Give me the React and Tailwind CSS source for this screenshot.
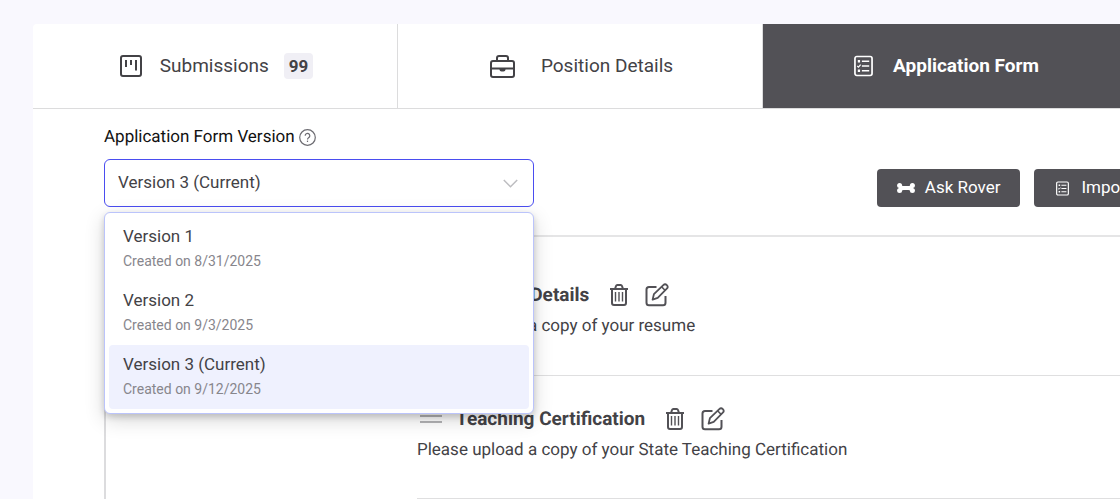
import { useState } from 'react'

const VERSIONS = [
  { id: '1', name: 'Version 1',           created: '8/31/2025' },
  { id: '2', name: 'Version 2',           created: '9/3/2025' },
  { id: '3', name: 'Version 3 (Current)', created: '9/12/2025' },
]

const SECTIONS = [
  { id: 'resume',   title: 'Resume Details',         text: 'Please upload a copy of your resume' },
  { id: 'teaching', title: 'Teaching Certification', text: 'Please upload a copy of your State Teaching Certification' },
]

function BoardIcon() {
  return (
    <svg className="w-[22px] h-[22px]" viewBox="0 0 22 22" fill="none" stroke="currentColor" strokeWidth="2" aria-hidden="true">
      <rect x="1" y="1" width="20" height="20" rx="2" />
      <path d="M6 5v7M11 5v5M16 5v10.5" />
    </svg>
  )
}

function BriefcaseIcon() {
  return (
    <svg className="w-[25px] h-[23px]" viewBox="0 0 25 23" fill="none" stroke="currentColor" strokeWidth="2" aria-hidden="true">
      <rect x="1" y="6" width="23" height="16" rx="2" />
      <path d="M7 6V3a2 2 0 0 1 2-2h7a2 2 0 0 1 2 2v3M1 13.5h23" />
      <path d="M9.5 13.5h6v1a2 2 0 0 1-2 2h-2a2 2 0 0 1-2-2z" fill="currentColor" stroke="none" />
    </svg>
  )
}

function FormIcon({ className }) {
  return (
    <svg className={className} viewBox="0 0 20 22" fill="none" stroke="currentColor" strokeWidth="1.8" aria-hidden="true">
      <rect x="1" y="1" width="18" height="20" rx="2" />
      <path d="M8.3 6h7.7M8.3 11h7.7M8.3 16h7.7" />
      <path d="M4 6h2.4M4 16h2.4" strokeWidth="2.4" />
      <path d="M3.4 11l1.3 1.2 2.3-2.6" strokeWidth="1.4" />
    </svg>
  )
}

function BoneIcon() {
  return (
    <svg className="w-[18px] h-[10px]" viewBox="0 0 18 10" fill="currentColor" aria-hidden="true">
      <circle cx="2.6" cy="2.5" r="2.5" />
      <circle cx="2.6" cy="7.5" r="2.5" />
      <circle cx="15.4" cy="2.5" r="2.5" />
      <circle cx="15.4" cy="7.5" r="2.5" />
      <path d="M2 2.4h2.6q1 .6 2 .6h4.8q1 0 2-.6H16v5.2h-2.6q-1-.6-2-.6H6.6q-1 0-2 .6H2z" />
    </svg>
  )
}

function TrashIcon() {
  return (
    <svg className="w-5 h-[22px]" viewBox="0 0 20 22" fill="none" stroke="currentColor" strokeWidth="2" aria-hidden="true">
      <path d="M1 5h18M6 5l1-3a1.6 1.6 0 0 1 1.4-1h3.2a1.6 1.6 0 0 1 1.4 1l1 3" />
      <path d="M3 5v14a2 2 0 0 0 2 2h10a2 2 0 0 0 2-2V5" />
      <path d="M6.5 8v9.5M10 8v9.5M13.5 8v9.5" strokeWidth="1.4" />
    </svg>
  )
}

function EditIcon() {
  return (
    <svg className="w-6 h-6" viewBox="0 0 24 24" fill="none" stroke="currentColor" strokeWidth="2" strokeLinejoin="round" aria-hidden="true">
      <path d="M11.5 4H4a2.5 2.5 0 0 0-2.5 2.5v13.2A2.5 2.5 0 0 0 4 22.2h14a2.5 2.5 0 0 0 2.5-2.5V13" />
      <path d="M7.6 16.6l1.3-5.4 9.4-9.1a2.5 2.5 0 0 1 3.5 3.6l-9.1 9.1z" strokeWidth="1.8" />
      <path d="M16.6 3.8l3.4 3.5" strokeWidth="1.6" />
    </svg>
  )
}

function HelpIcon() {
  return (
    <svg className="w-[17px] h-[17px]" viewBox="0 0 17 17" fill="none" stroke="currentColor" strokeWidth="1.2" aria-hidden="true">
      <circle cx="8.5" cy="8.5" r="7.8" />
      <path d="M6.2 6.7a2.3 2.3 0 1 1 3.7 1.8c-.8.6-1.4 1-1.4 2" />
      <path d="M8.5 11.6v1.4" />
    </svg>
  )
}

function Tab({ icon, label, count, active, gap }) {
  return (
    <button
      type="button"
      role="tab"
      aria-selected={!!active}
      className={`flex items-center justify-center shrink-0 w-[365px] h-[85px] pl-[3px] border-b border-r border-[#dcdcdd] text-[19px] ${gap} ${
        active ? 'bg-[#525156] text-white font-bold' : 'text-[#434246]'
      }`}
    >
      {icon}
      <span>{label}</span>
      {count && (
        <span className="-ml-[3px] px-[5px] rounded-[4px] bg-[#f0eff5] text-[17px] leading-[26px] font-bold">{count}</span>
      )}
    </button>
  )
}

function VersionSelect() {
  const [version, setVersion] = useState('3')
  const [open, setOpen]       = useState(true)

  const toggle = e => {
    e.preventDefault()
    setOpen(o => !o)
  }

  return (
    <div className="w-[430px] shrink-0">
      <div className="flex items-center gap-1 h-6 mb-2.5">
        <label htmlFor="version" className="text-[17px] leading-6 text-[#111]">Application Form Version</label>
        <button type="button" aria-label="Help" className="text-[#6d6c72]"><HelpIcon /></button>
      </div>

      <div className="relative">
        <select
          id="version"
          value={version}
          onMouseDown={toggle}
          onChange={e => setVersion(e.target.value)}
          className="block w-full h-12 pl-[13px] pr-10 appearance-none rounded-md border border-[#4a4df0] bg-white text-[17px] text-[#434246] focus:outline-none"
        >
          {VERSIONS.map(v => <option key={v.id} value={v.id}>{v.name}</option>)}
        </select>
        <svg className="absolute right-4 top-5 w-[15px] h-[9px] text-[#bdbdc0] pointer-events-none" viewBox="0 0 15 9" fill="none" stroke="currentColor" strokeWidth="1.5" aria-hidden="true">
          <path d="M.8 1l6.7 6.7L14.2 1" />
        </svg>

        {open && (
          <ul className="absolute z-10 top-full mt-[5px] inset-x-0 p-1 rounded-md border border-[#bbc4fb] bg-white shadow-[0_6px_20px_rgba(0,0,0,0.16),0_3px_6px_rgba(0,0,0,0.16)]">
            {VERSIONS.map(v => (
              <li key={v.id}>
                <button
                  type="button"
                  onClick={() => { setVersion(v.id); setOpen(false) }}
                  className={`block w-full px-3.5 py-[7px] rounded-[4px] text-left ${v.id === version ? 'bg-[#eff1fe]' : ''}`}
                >
                  <span className="block text-[17px] leading-6 text-[#434246]">{v.name}</span>
                  <span className="block text-[14px] leading-[26px] text-[#87868c]">Created on {v.created}</span>
                </button>
              </li>
            ))}
          </ul>
        )}
      </div>
    </div>
  )
}

function Section({ title, text, first }) {
  return (
    <section className={`border-b border-[#dfdfe0] ${first ? 'pt-[46px] pb-[37px]' : 'pt-[31px] pb-9'}`}>
      <div className="flex items-center h-6 text-[#434246]">
        <span className="flex flex-col gap-1 w-[22px] ml-[3px] mr-3.5" aria-hidden="true">
          <span className="h-0.5 bg-[#b4b4b6]" />
          <span className="h-0.5 bg-[#b4b4b6]" />
        </span>
        <h2 className="text-[19px] font-bold mr-5">{title}</h2>
        <button type="button" aria-label={`Delete ${title}`} className="mr-4 text-[#525156]"><TrashIcon /></button>
        <button type="button" aria-label={`Edit ${title}`} className="text-[#525156]"><EditIcon /></button>
      </div>
      <p className="mt-[7px] text-[17px] leading-6 text-[#434246]">{text}</p>
    </section>
  )
}

export default function App() {
  return (
    <div className="flex flex-col min-h-screen overflow-hidden bg-[#f9f8fe] pt-6 pl-[33px] font-['Roboto',sans-serif] [text-rendering:geometricPrecision]">
      <main className="flex-1 min-w-[1121px] bg-white rounded-tl-[4px]">
        <nav role="tablist" className="flex">
          <Tab icon={<BoardIcon />} label="Submissions" count="99" gap="gap-[18px]" />
          <Tab icon={<BriefcaseIcon />} label="Position Details" gap="gap-[26px]" />
          <Tab icon={<FormIcon className="w-[19px] h-[22px]" />} label="Application Form" active gap="gap-5" />
        </nav>

        <div className="pl-[71px] pt-4">
          <div className="flex items-end justify-between">
            <VersionSelect />
            <div className="flex gap-3.5 shrink-0 text-[17px] text-white">
              <button type="button" className="flex items-center gap-2.5 h-[38px] px-5 rounded-[4px] bg-[#525156]">
                <BoneIcon />
                Ask Rover
              </button>
              <button type="button" className="flex items-center gap-3 h-[38px] px-[22px] rounded-[4px] bg-[#525156]">
                <FormIcon className="w-[13px] h-[15px]" />
                Import
              </button>
            </div>
          </div>

          <div className="mt-7 pl-[311px] border-t-2 border-l-2 border-t-[#e5e5e6] border-l-[#dcdcde]">
            {SECTIONS.map((s, i) => <Section key={s.id} title={s.title} text={s.text} first={i === 0} />)}
          </div>
        </div>
      </main>
    </div>
  )
}
